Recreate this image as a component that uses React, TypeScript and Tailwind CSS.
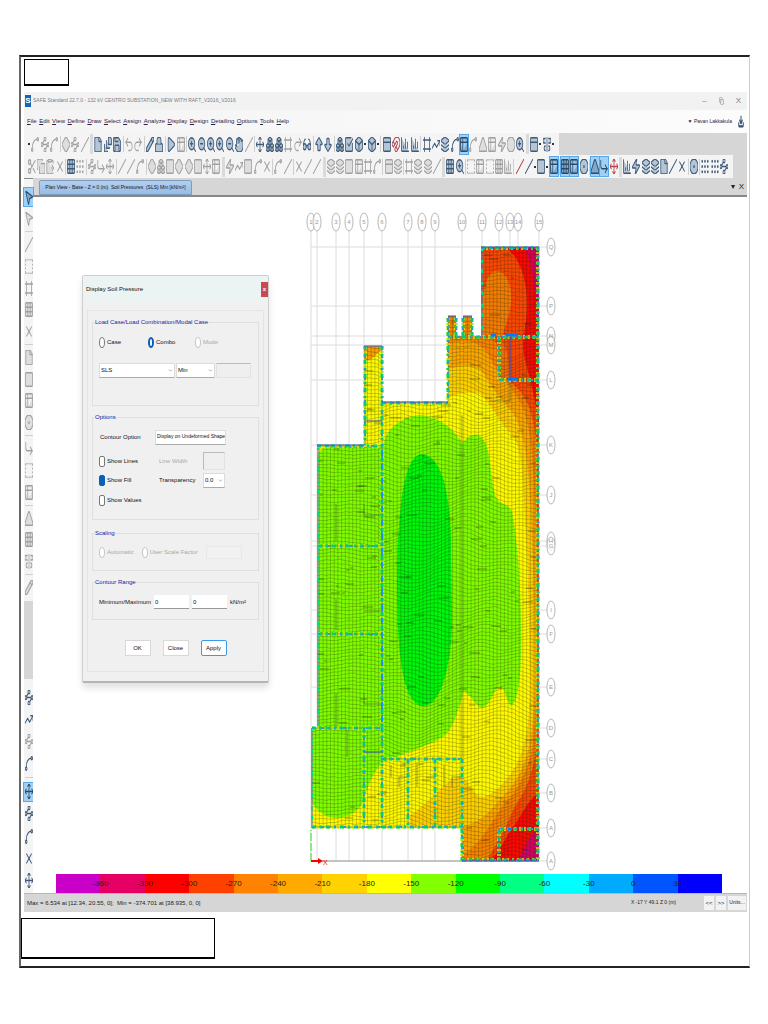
import type { ReactNode } from "react";
import clsx from "clsx";
import {
  AlignCenterVertical, ArrowBigDown, ArrowBigUp, Box, Boxes, ChartColumn, CheckSquare, ChevronDown, Circle, CircleDot,
  ClipboardPaste, Copy, CornerDownRight, Diamond, Download, File, FileStack, Frame, Glasses, Grid3x3, Grip, Hand,
  Layers, Lock, Magnet, MousePointer2, Move, PanelTop, Pencil, Play, Redo2, Save, Scissors, Slash, Spline, Square,
  SquareDashed, Table2, TrendingUp, Triangle, Undo2, Waypoints, X, ZoomIn, ZoomOut, Zap,
} from "lucide-react";
import type { LucideIcon } from "lucide-react";

type Tone = "gray" | "navy" | "active" | "red";
type Tool = [LucideIcon, Tone] | "|" | "." | "#";

const toneClass: Record<Tone, string> = {
  gray: "text-[#a0a0a0] fill-[#dedede]",
  navy: "text-[#3f5a78] fill-[#b4c5d6]",
  active: "text-[#2c4a68] fill-[#7fa9cc] bg-[#9fd1f7] outline outline-[#5aa9e6]",
  red: "text-[#b8404a] fill-none",
};

const g = (...icons: LucideIcon[]): Tool[] => icons.map((i) => [i, "gray"]);
const n = (...icons: LucideIcon[]): Tool[] => icons.map((i) => [i, "navy"]);
const a = (...icons: LucideIcon[]): Tool[] => icons.map((i) => [i, "active"]);

// open shapes that must not be filled
const lineIcons: LucideIcon[] = [Spline, Slash, X, Undo2, Redo2, TrendingUp, CornerDownRight, Move, Waypoints, Frame];

const mainTools: Tool[] = [
  ".", ...g(Spline, Waypoints, Spline), "|", ...g(Diamond, Waypoints, Slash), "#",
  ...n(File, FileStack, Save), "|", ...g(Undo2, Redo2), "|", ...n(Pencil, Lock), "|", ...n(Play), ...g(Table2), "|",
  ...n(ZoomIn, ZoomOut, ZoomIn, ZoomIn, ZoomOut, Hand), ...g(Slash), "|",
  ...n(Move, Boxes, Boxes), ...g(Frame, Redo2), ...n(Glasses), "|", ...n(ArrowBigUp, ArrowBigDown), "|",
  ...n(Boxes, CheckSquare, Box), ".", ...n(Box), ".", "|",
  ...n(PanelTop), [Magnet, "red"], ...n(ChartColumn, ChartColumn), "|",
  ...n(Frame, TrendingUp, Layers, Spline), ...a(Table2), ...g(Spline, Triangle, Table2, Zap, Circle), ...n(ZoomIn), "#",
  ...n(PanelTop), ".", ...n(AlignCenterVertical), ".",
];

const editTools: Tool[] = [
  ...g(Scissors, Copy, ClipboardPaste, X), "|", ...n(Grid3x3), ...g(Grip), "|", ...g(Waypoints, CornerDownRight, Move), "|",
  ...g(Slash, Slash, Spline), "|", ...g(Diamond, Boxes, Square, Diamond, Diamond, Square, Move, Table2), "#",
  ...g(Zap, TrendingUp, Square, Spline, X), "|", ...g(Spline, Slash), "|", ...g(X, Slash, Slash), "#",
  ...g(Layers, Layers, Square, Table2, Frame, Spline), "|", ...g(PanelTop, Layers), "|",
  ...g(Frame, Layers, Layers, Slash), "#", ...n(Grid3x3, ZoomIn), "|",
  ...g(SquareDashed, Table2, SquareDashed, Grid3x3, ChartColumn), "|",
  [Slash, "red"], ...n(Slash), ".", ...n(Square), ".", ...a(Table2), "|", ...a(Grid3x3, Table2), ...n(CircleDot), "|",
  ...a(Triangle, CornerDownRight), [Move, "red"], "#",
  ...n(ChartColumn, Zap, Layers, Layers, File, Slash, X), "|", ...n(CircleDot), "|", ...n(Grip, Grip, Waypoints),
];

const drawTools: Tool[] = [
  ...a(MousePointer2), ...g(MousePointer2), "|", ...g(Slash, SquareDashed, Frame, Grid3x3, X), "|",
  ...g(File, Square, Table2, CircleDot), "|", ...g(CornerDownRight, SquareDashed, Table2), "|",
  ...g(Triangle, Grid3x3, AlignCenterVertical), "|", ...g(Pencil),
];

const snapTools: Tool[] = [
  ...n(Waypoints, TrendingUp), ...g(Waypoints), ...n(Spline), "|", ...a(Move), ...n(Waypoints, Spline, X, Move),
];

const menus = ["File", "Edit", "View", "Define", "Draw", "Select", "Assign", "Analyze", "Display", "Design", "Detailing", "Options", "Tools", "Help"];

const scale = [
  { color: "bg-[#c800c8]", label: "-360" },
  { color: "bg-[#e60064]", label: "-330" },
  { color: "bg-[#ff0000]", label: "-300" },
  { color: "bg-[#ff4100]", label: "-270" },
  { color: "bg-[#ff8200]", label: "-240" },
  { color: "bg-[#ffaa00]", label: "-210" },
  { color: "bg-[#ffd200]", label: "-180" },
  { color: "bg-[#ffff00]", label: "-150" },
  { color: "bg-[#82ff00]", label: "-120" },
  { color: "bg-[#00ff00]", label: "-90" },
  { color: "bg-[#00ff82]", label: "-60" },
  { color: "bg-[#00ffff]", label: "-30" },
  { color: "bg-[#00aaff]", label: "0" },
  { color: "bg-[#0055ff]", label: "30" },
  { color: "bg-[#0000ff]", label: "" },
];

/* =======================
   Toolbars
======================= */
function Tools({ items, vertical = false }: { items: Tool[]; vertical?: boolean }) {
  return (
    <>
      {items.map((item, i) => {
        if (item === "|") return <span key={i} className={vertical ? "h-px w-2 bg-[#d0d0d0]" : "h-4 w-px bg-[#cfcfcf]"} />;
        if (item === "#") return <span key={i} className="h-5 w-[3px] bg-[#dadada]" />;
        if (item === ".") return <span key={i} className="size-[2px] bg-[#333]" />;
        const [Icon, tone] = item;
        return (
          <button key={i} aria-label={`Tool ${i + 1}`} className={clsx("flex shrink-0 items-center justify-center", vertical ? "h-[18px] w-[9px]" : "h-[19px] w-[8px]", toneClass[tone])}>
            <Icon
              preserveAspectRatio="none"
              viewBox="2 2 20 20"
              strokeWidth={2}
              fill={lineIcons.includes(Icon) ? "none" : "inherit"}
              className="h-[15px] w-[8px]"
            />
          </button>
        );
      })}
    </>
  );
}

/* =======================
   Plan drawing
======================= */
const columnsX = [311, 317, 336, 349, 364, 382, 408, 422, 435, 462, 482, 499, 510, 518, 539];
const rowsY: [number, string][] = [
  [247, "Q"], [306, "P"], [336, "N"], [345, "M"], [380, "L"], [445, "K"], [495, "J"], [541, "H"], [546, "G"],
  [610, "I"], [634, "F"], [687, "E"], [728, "D"], [759, "C"], [793, "B"], [828, "A"], [861, "A"],
];

const slab =
  "M481 247H539V861H462V828H311V728H317V445H364V346H382V402H448V316H456V336H463V316H472V336H481Z";

const walls = [
  "M481 248H538", "M538 247V861", "M448 337H538", "M448 318V402", "M456 318V336", "M463 318V336", "M472 318V336",
  "M499 337V379", "M499 380H539", "M382 403H448", "M317 446H382", "M318 546H382", "M318 634H382", "M312 728H382",
  "M364 728V828", "M382 728V828", "M382 759H462", "M408 759V828", "M435 759V828", "M462 759V861", "M312 827H462",
  "M499 829H539", "M499 829V861", "M462 860H539", "M365 346V445", "M382 346V728",
];

const edges = ["M318 446V728", "M312 728V828", "M482 247V336"];

// deterministic noise in 0..1
const noise = (i: number) => {
  const v = Math.sin(i * 12.9898 + 4.1) * 43758.5453;
  return v - Math.floor(v);
};

function meshPath() {
  let d = "";
  for (let x = 312; x < 540; x += 3.7) d += `M${x.toFixed(1)} 247V861`;
  for (let y = 236; y < 870; y += 3.7) {
    for (let x = 310; x <= 540; x += 4) {
      const flat = x < 382 || y < 350 ? 0.35 : 1;
      const dy =
        flat * (5 * Math.sin(x * 0.045 + y * 0.011) * Math.sin(y * 0.019 + 1) + 2.8 * Math.sin(x * 0.11 + y * 0.043)) +
        1.3 * (noise(x + y * 3) - 0.5);
      d += `${x === 310 ? "M" : "L"}${x} ${(y + dy).toFixed(1)}`;
    }
  }
  return d;
}

// short dark strokes where mesh rows bunch together
function denseRows() {
  let d = "";
  for (let i = 0; i < 230; i++) {
    const x = 312 + noise(i) * 220;
    const y = 250 + noise(i + 500) * 605;
    d += `M${x.toFixed(0)} ${y.toFixed(0)}h${(3 + noise(i + 900) * 8).toFixed(0)}`;
  }
  return d;
}

function PlanView() {
  return (
    <svg viewBox="33 197 714 677" className="block w-full" role="img" aria-label="Soil pressure contours">
      <defs>
        <clipPath id="slab">
          <path d={slab} />
        </clipPath>
      </defs>

      <g stroke="#dcdcdc" strokeWidth="1" fill="none">
        {columnsX.map((x) => <path key={x} d={`M${x} 231V861`} />)}
        {rowsY.map(([y]) => <path key={y} d={`M311 ${y}H547`} />)}
      </g>
      <path d="M311 861H539" stroke="#999" />

      <g clipPath="url(#slab)">
        <path d="M300 240H545V870H300Z" fill="#fffa00" />
        {/* -150 */}
        <path fill="#80fb00" d="M317 455Q321 448 328 447H382L384 442C388 427 402 417 420 415C440 417 455 430 462 443C467 438 472 432 480 436C491 445 489 466 494 490C497 508 507 500 512 512C518 540 522 600 521 650C521 680 517 704 511 706C507 704 506 688 499 686C494 690 490 706 482 708C476 707 472 696 464 691C459 706 455 728 443 737C430 745 408 752 382 763C374 772 370 780 364 799C360 813 345 818 336 818C324 818 312 808 311 797V720H317Z" />
        {/* -120 */}
        <path fill="#00f60c" d="M421 454C405 457 398 500 397 580C397 640 400 706 424 706C444 706 453 650 452 615C452 590 451 570 451 540C450 490 441 455 421 454Z" />
        {/* -210 */}
        <path fill="#fdd000" d="M448 370V398C455 394 470 391 480 394C492 404 500 424 513 436C522 448 523 480 525 520C529 580 529 640 530 680C530 730 524 760 505 781C496 791 488 797 482 797C472 795 468 778 460 776C448 778 432 800 410 816V828H462V861H539V247H481V336Z" />
        {/* -240 */}
        <path fill="#fba600" d="M448 336V369C458 366 472 363 482 371C492 388 500 398 512 412C524 430 529 460 531 520C535 600 536 680 533 720C529 760 520 780 500 799C490 812 478 824 462 826V861H539V247H481V336Z" />
        {/* -270 */}
        <path fill="#f78200" d="M448 300V344C460 339 478 340 487 352C495 370 510 385 520 402C532 424 534 470 536 540C538 640 537 710 533 745C527 776 514 795 501 808C490 824 480 845 463 854V861H539V247H481V300Z" />
        {/* -300 */}
        <path fill="#fa4804" d="M481 247H539V861H486C500 840 507 824 514 808C528 788 535 765 537 740C538 650 538 500 536 440C533 410 525 392 510 382C504 368 502 350 494 340L481 336Z" />
        <path fill="#f27c06" d="M481 336V310C484 290 486 271 497 271C509 272 512 290 511 302C510 318 504 326 503 336Z" />
        <path fill="#ee6c0c" d="M500 338C506 345 510 360 509 380H499Z" />
        {/* -330 */}
        <path fill="#fa0804" d="M505 247C519 256 527 278 527 305C527 325 521 340 524 355C529 378 536 396 539 430V247Z" />
        <path fill="#fa0804" d="M539 792C526 802 522 816 512 828C504 840 500 852 490 861H539Z" />
        {/* -360 */}
        <path fill="#d80058" d="M524 247C532 262 536 290 537 335H539V247Z" />
        <path fill="#d80068" d="M539 828C529 836 523 850 518 861H539Z" />
        <path fill="#f7a000" d="M364 346H382V352C376 350 372 366 364 358Z" />

        <path d={meshPath()} fill="none" stroke="#1c2800" strokeWidth="0.6" opacity="0.4" />
        <path d={denseRows()} fill="none" stroke="#101800" strokeWidth="0.8" opacity="0.5" />
      </g>

      <g fill="none" stroke="#4a5a50" strokeWidth="0.8" opacity="0.7">
        <path d="M336 504V541M364 515V504M364 515H382M336 599V630M364 611H382M336 693V728M364 693V704H382M347 728V757M391 765V777M417 765V787M399 787V777H408M426 777H435M452 787V777H462M444 765V787M462 415V760" />
        <path d="M510 337V401H490" />
      </g>

      {/* walls */}
      <g fill="none">
        {edges.map((d) => (
          <g key={d}>
            <path d={d} stroke="#6a7ab8" strokeWidth="1" />
            <path d={d} stroke="#00dc80" strokeWidth="2" strokeDasharray="4 9 3 6" />
          </g>
        ))}
        {walls.map((d) => (
          <g key={d}>
            <path d={d} stroke="#d4f400" strokeWidth="4" strokeDasharray="2 3" opacity="0.8" />
            <path d={d} stroke="#00e070" strokeWidth="3" strokeDasharray="4 4 2 4" />
            <path d={d} stroke="#20a8e8" strokeWidth="2" strokeDasharray="2 8 2 10" />
            <path d={d} stroke="#5070a0" strokeWidth="0.5" />
          </g>
        ))}
        <path d="M382 450V728" stroke="#2090f0" strokeWidth="2" strokeDasharray="6 8" />
        <path d="M506 335H518M507 379H518M508 829H512M491 335H496" stroke="#0878ff" strokeWidth="3" />
      </g>
      <path
        d="M364 421H382M364 752H382M510 337V380M364 346H382M382 402H448M317 445H364M481 247H539M448 316H456M463 316H472M462 861H539"
        stroke="#3d4fd0" strokeWidth="1" fill="none"
      />

      {/* grid bubbles */}
      <g fill="#fff" fillOpacity="0.7" stroke="#a4a4a4" strokeWidth="0.8">
        {columnsX.map((x) => <ellipse key={x} cx={x} cy="222" rx="4" ry="9" />)}
        {rowsY.map(([y]) => <ellipse key={y} cx="551" cy={y} rx="4" ry="9" />)}
      </g>
      <g fill="#999" fontSize="6" textAnchor="middle">
        {columnsX.map((x, i) => <text key={x} x={x} y="224">{i + 1}</text>)}
        {rowsY.map(([y, label]) => <text key={y} x="551" y={y + 2}>{label}</text>)}
      </g>

      {/* origin axes */}
      <path d="M311 861V830" stroke="#28e828" strokeDasharray="8 2" />
      <path d="M311 861H320" stroke="#f00" strokeWidth="2" />
      <path d="M318 858L323 861L318 864Z" fill="#f00" />
      <text x="323" y="865" fontSize="7" fill="#f00">X</text>
    </svg>
  );
}

/* =======================
   Dialog
======================= */
function Group({ title, className, children }: { title: string; className: string; children: ReactNode }) {
  return (
    <fieldset className={clsx("border border-[#dfdfdf]", className)}>
      <legend className="-ml-1 h-[10px] leading-[10px] text-[#2020a8]">{title}</legend>
      {children}
    </fieldset>
  );
}

function Radio({ name, label, checked, disabled }: { name: string; label: string; checked?: boolean; disabled?: boolean }) {
  return (
    <label className={clsx("flex items-center gap-[2px]", disabled && "text-[#a8a8a8]")}>
      <input type="radio" name={name} defaultChecked={checked} disabled={disabled} className="h-[11px] w-[6px] appearance-none rounded-[50%] border border-[#777] bg-white checked:border-2 checked:border-[#0860b8] disabled:border-[#c4c4c4]" />
      {label}
    </label>
  );
}

function Check({ label, checked }: { label: string; checked?: boolean }) {
  return (
    <label className="flex items-center gap-[2px]">
      <input type="checkbox" defaultChecked={checked} className="h-[11px] w-[6px] appearance-none rounded-[2px] border border-[#777] bg-white checked:border-[#0860b8] checked:bg-[#0860b8]" />
      {label}
    </label>
  );
}

function Select({ label, value, className }: { label: string; value: string; className: string }) {
  return (
    <div className={clsx("relative", className)}>
      <select aria-label={label} className="block h-[15px] w-full appearance-none border border-[#dcdcdc] border-b-[#aaa] bg-white pl-px">
        <option>{value}</option>
      </select>
      <ChevronDown className="pointer-events-none absolute top-[5px] right-[2px] size-[5px] text-[#444]" />
    </div>
  );
}

function SoilPressureDialog() {
  return (
    <div role="dialog" aria-label="Display Soil Pressure" className="absolute top-[78px] left-[49px] w-[187px] rounded-[2px] border border-[#cfcfcf] border-b-2 border-b-[#b4b4b4] bg-[#f0f0f0] text-[6px] text-[#111] shadow-[0_5px_6px_rgba(0,0,0,0.12)]">
      <div className="flex h-[26px] items-center justify-between bg-[#ebf4f2] pl-[3px]">
        <span>Display Soil Pressure</span>
        <button aria-label="Close dialog" className="flex h-[15px] w-[7px] items-center justify-center bg-[#c8494e] font-bold text-white">x</button>
      </div>
      <div className="mx-1 mt-2 mb-[9px] border border-[#e4e4e4] px-1 pt-[6px] pb-[15px]">
        <Group title="Load Case/Load Combination/Modal Case" className="h-[89px] pl-[6px]">
          <div className="mt-[10px] grid grid-cols-[49px_47px_1fr]">
            <Radio name="loadcase" label="Case" />
            <Radio name="loadcase" label="Combo" checked />
            <Radio name="loadcase" label="Mode" disabled />
          </div>
          <div className="mt-[15px] flex gap-px">
            <Select label="Load combination" value="SLS" className="w-[76px]" />
            <Select label="Envelope" value="Min" className="w-[39px]" />
            <input aria-label="Mode number" disabled className="h-[15px] w-[35px] border border-[#e2e2e2] border-t-[#bbb] bg-[#efefef]" />
          </div>
        </Group>

        <Group title="Options" className="mt-[6px] h-[108px] pl-[6px]">
          <div className="grid grid-cols-[56px_48px_1fr] items-center">
            <span className="flex h-[30px] items-center pl-px">Contour Option</span>
            <Select label="Contour option" value="Display on Undeformed Shape" className="col-span-2 w-[71px] text-[5px]" />
            <Check label="Show Lines" />
            <label htmlFor="line-width" className="pl-1 text-[#a8a8a8]">Line Width</label>
            <input id="line-width" disabled className="h-[18px] w-[22px] border border-[#e2e2e2] border-t-[#bbb] border-l-[#bbb] bg-[#efefef]" />
            <Check label="Show Fill" checked />
            <span className="flex h-[21px] items-center pl-1">Transparency</span>
            <Select label="Transparency" value="0.0" className="w-[22px]" />
            <div className="mt-1"><Check label="Show Values" /></div>
          </div>
        </Group>

        <Group title="Scaling" className="mt-[8px] h-[43px] pl-[6px]">
          <div className="mt-[8px] flex items-center gap-[8px]">
            <Radio name="scaling" label="Automatic" disabled />
            <Radio name="scaling" label="User Scale Factor" disabled />
            <input aria-label="Scale factor" disabled className="h-[13px] w-[36px] border border-[#e8e8e8] bg-[#f1f1f1]" />
          </div>
        </Group>

        <Group title="Contour Range" className="mt-[6px] h-[43px] pl-[6px]">
          <div className="mt-[8px] flex items-center gap-[3px]">
            <span className="w-[52px]">Minimum/Maximum</span>
            <input aria-label="Minimum" defaultValue="0" className="h-[14px] w-[35px] border-b border-[#999] bg-white pl-px" />
            <input aria-label="Maximum" defaultValue="0" className="h-[14px] w-[35px] border-b border-[#999] bg-white pl-px" />
            <span>kN/m²</span>
          </div>
        </Group>

        <div className="mt-[20px] flex justify-center gap-[12px]">
          <button className="h-[16px] w-[26px] border border-[#d8d8d8] bg-white">OK</button>
          <button className="h-[16px] w-[26px] border border-[#d8d8d8] bg-white">Close</button>
          <button className="h-[16px] w-[26px] rounded-[2px] border border-[#3c9be8] bg-white">Apply</button>
        </div>
      </div>
    </div>
  );
}

export default function App() {
  return (
    <main className="min-h-screen bg-white pt-[55px] pr-[18px] pb-[55px] pl-[19px] font-['Liberation_Sans',sans-serif] text-[6px]">
      <div className="border-t-2 border-r border-b-2 border-l-2 border-[#222] border-r-[#ccc] border-l-[#666] pr-[2px] pb-[7px]">
        <div className="mt-[2px] ml-[3px] h-[27px] w-[45px] border border-b-2 border-black" />

        <div className="mt-[6px] ml-[3px] bg-[#d6d6d6]">
          {/* Title bar */}
          <div className="flex h-[18px] items-center bg-[#f2f2f2] text-[#7c7c7c]">
            <span className="ml-px flex h-[12px] w-[6px] items-center justify-center bg-[#1268b8] text-[8px] font-bold text-white">S</span>
            <h1 className="ml-[2px] text-[5px]">SAFE Standard 22.7.0 - 132 kV CENTRO SUBSTATION_NEW WITH RAFT_V2016_V2016</h1>
            <div className="mr-[6px] ml-auto flex items-center gap-[12px] text-[8px]">
              <button aria-label="Minimize">–</button>
              <button aria-label="Restore"><Copy preserveAspectRatio="none" className="h-[8px] w-[5px]" /></button>
              <button aria-label="Close window">X</button>
            </div>
          </div>

          {/* Menu bar */}
          <div className="flex h-[23px] items-center bg-linear-to-r from-[#f4f4f4] to-[#fcfcfc] pl-[3px] text-[#30203c]">
            <nav className="flex w-[262px] justify-between">
              {menus.map((m) => (
                <a key={m} href="#" className="block first-letter:underline">{m}</a>
              ))}
            </nav>
            <button className="mr-[6px] ml-auto text-[5px]">▼ Pavan Lakkakula</button>
            <Download preserveAspectRatio="none" className="mr-[3px] h-[13px] w-[6px] text-[#34506f]" strokeWidth={4} />
          </div>

          {/* Toolbars */}
          <div className="flex h-[22px]">
            <div className="flex w-[74%] items-center justify-between bg-[#f4f4f4] px-[4px]">
              <Tools items={mainTools} />
            </div>
          </div>
          <div className="flex h-[23px]">
            <div className="flex w-[98%] items-center justify-between bg-[#f4f4f4] px-[4px]">
              <Tools items={editTools} />
            </div>
          </div>

          <div className="flex">
            <aside className="flex w-[9px] shrink-0 flex-col justify-between border-t border-[#888]">
              <div className="flex h-[422px] flex-col items-center justify-between bg-[#f4f4f4] pt-[9px] pb-1">
                <Tools items={drawTools} vertical />
              </div>
              <div className="flex h-[214px] flex-col items-center justify-between bg-[#f4f4f4] pt-[9px] pb-[3px]">
                <Tools items={snapTools} vertical />
              </div>
            </aside>

            <div className="min-w-0 flex-1">
              <div className="flex h-[19px] items-end border-b-2 border-[#888] pl-[6px]">
                <div className="flex h-[15px] w-[153px] items-center justify-center rounded-t-[2px] border border-[#7d9cc0] bg-linear-to-b from-[#b4cfee] to-[#98bce4] text-[5px] whitespace-pre text-[#10161e]">
                  Plan View - Base - Z = 0 (m)  Soil Pressures  (SLS) Min [kN/m²]
                </div>
                <div className="mr-[3px] ml-auto flex gap-1 pb-1 text-[8px] leading-[9px] text-[#222]">
                  <button aria-label="View list">▾</button>
                  <button aria-label="Close view">X</button>
                </div>
              </div>
              <div className="relative bg-white">
                <PlanView />
                <SoilPressureDialog />
                <div className="mr-[25px] ml-[23px] flex">
                  {scale.map((s) => (
                    <div key={s.color} className={clsx("relative flex h-[19px] flex-1 items-center", s.color)}>
                      <span className="absolute right-0 z-10 translate-x-1/2 text-[8px] text-[#26241c]">{s.label}</span>
                    </div>
                  ))}
                </div>
              </div>
            </div>
          </div>

          {/* Status bar */}
          <div className="flex h-[19px] items-center border-t border-[#b8b8b8] pl-[3px] text-[#222]">
            <span className="whitespace-pre">Max = 6.534 at [12.34, 20.55, 0];  Min = -374.701 at [38.935, 0, 0]</span>
            <span className="mr-[28px] ml-auto text-[5px]">X -17  Y 49.1  Z 0 (m)</span>
            <div className="mr-px flex gap-[2px]">
              <button className="h-[14px] w-[10px] bg-[#f2f2f2]">&lt;&lt;</button>
              <button className="h-[14px] w-[10px] bg-[#f2f2f2]">&gt;&gt;</button>
              <button className="h-[14px] w-[18px] bg-[#f2f2f2] text-[5px]">Units...</button>
            </div>
          </div>
        </div>

        <div className="mt-[6px] h-[41px] w-[194px] border border-b-2 border-black" />
      </div>
    </main>
  );
}
